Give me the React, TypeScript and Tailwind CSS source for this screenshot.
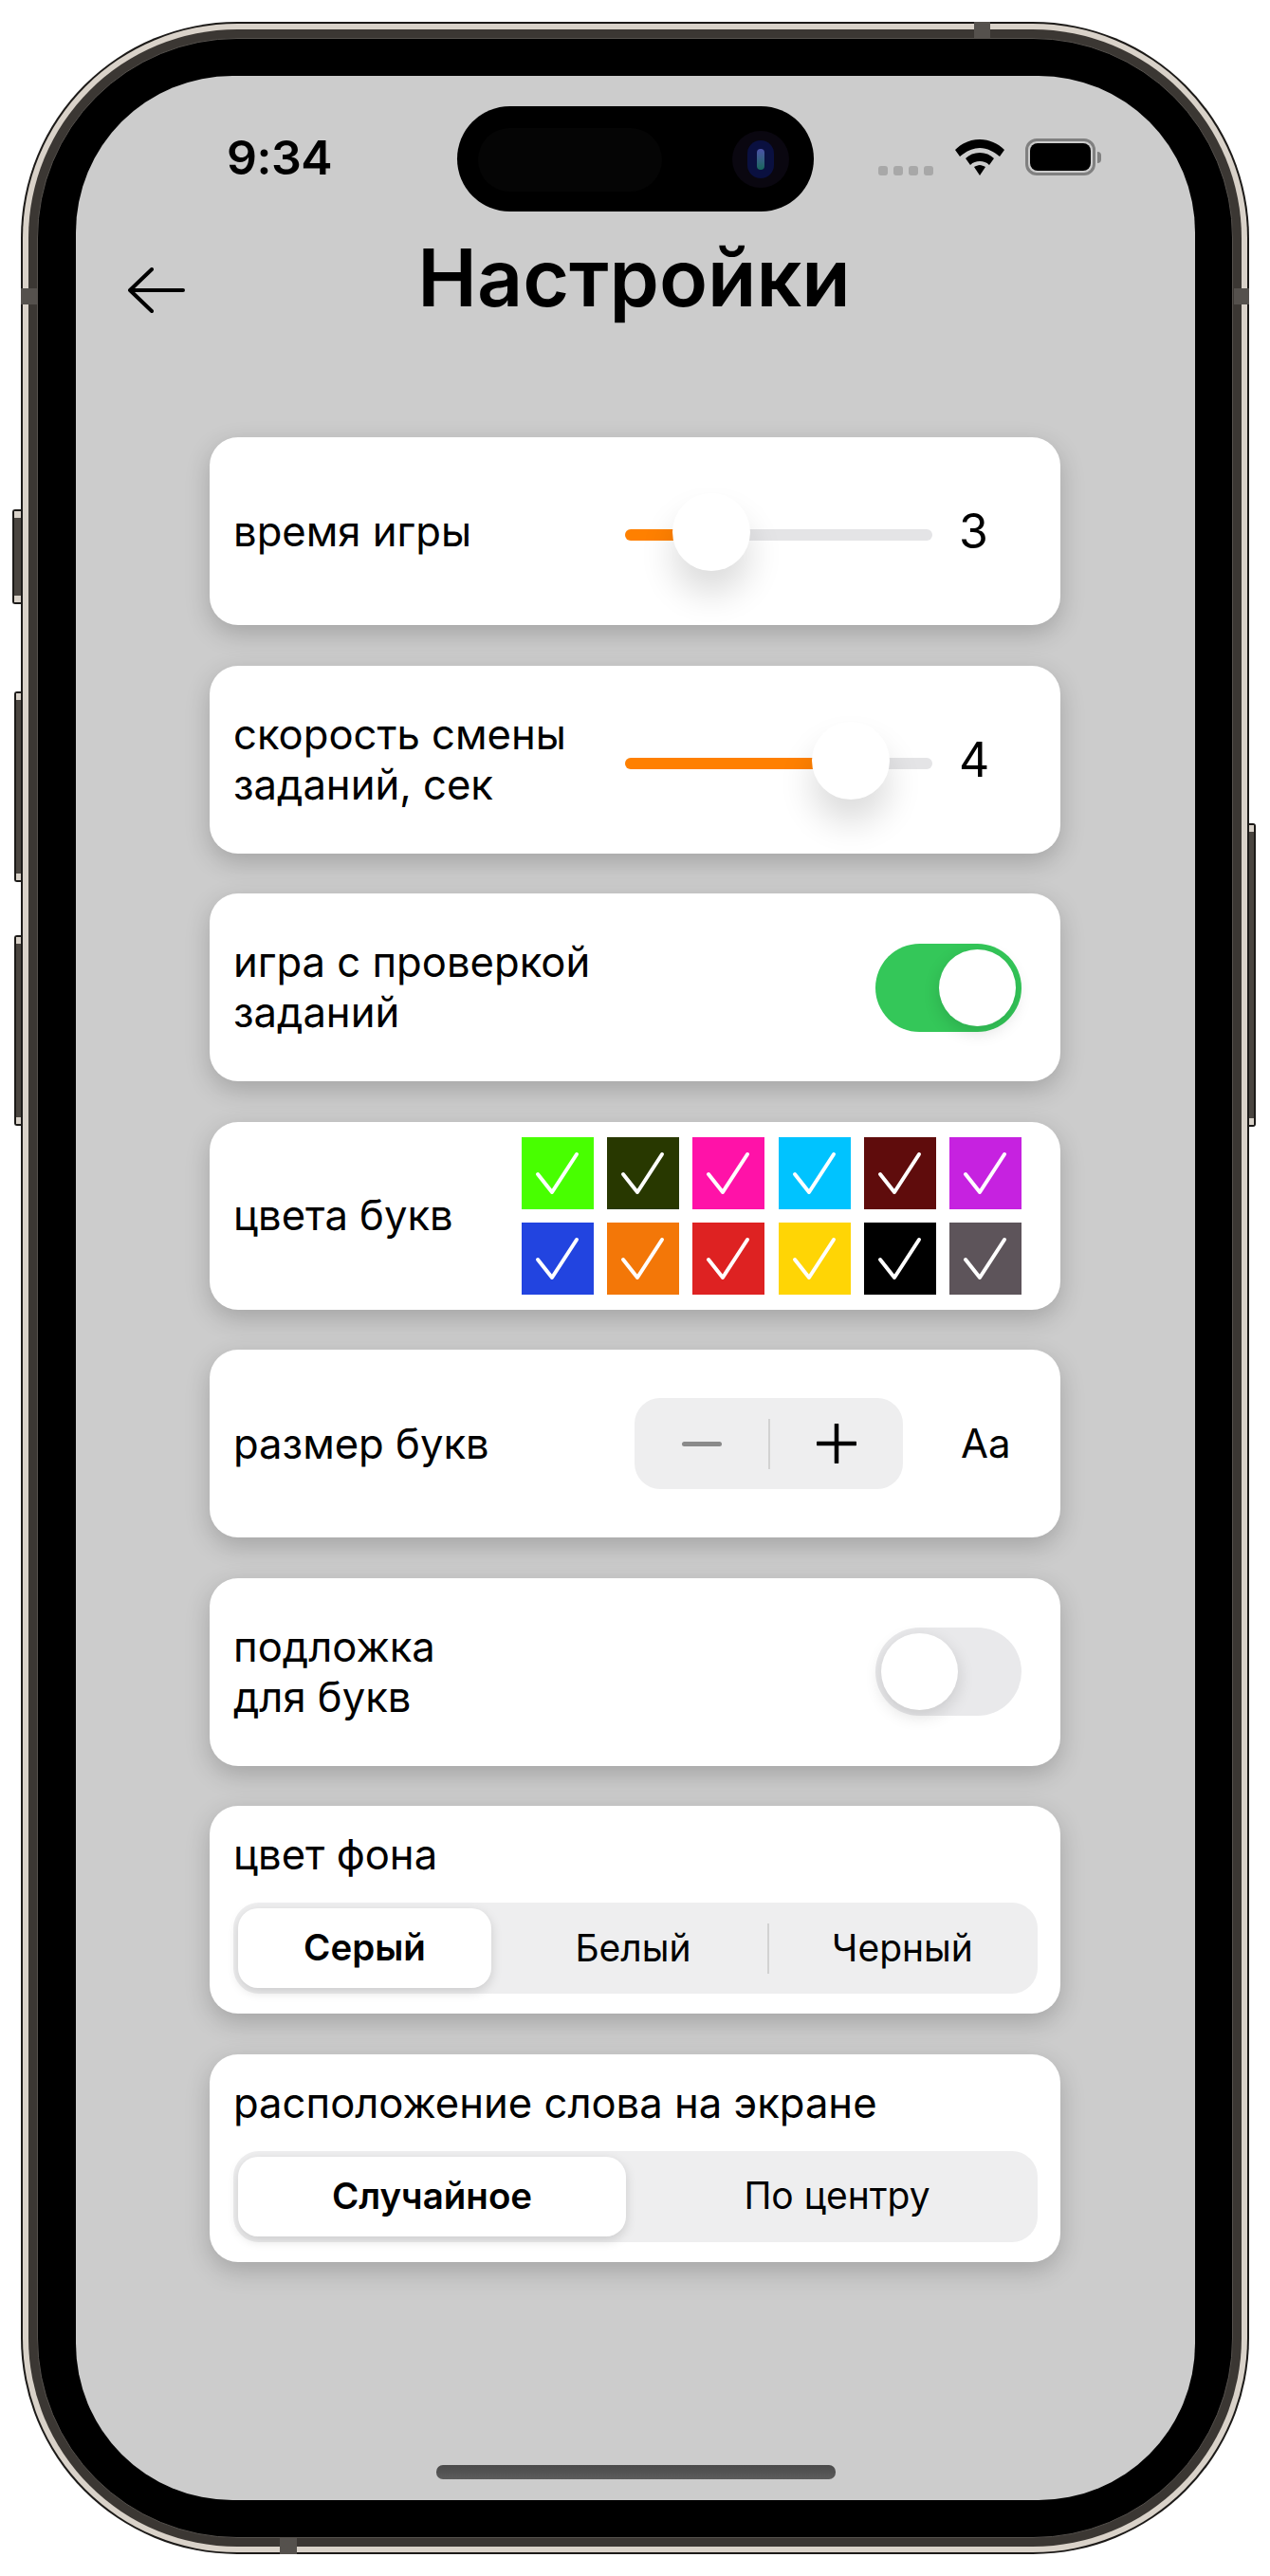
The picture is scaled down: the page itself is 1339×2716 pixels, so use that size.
const swatches = ['#48ff00', '#283800', '#ff12a8', '#00c3ff', '#5f0c0c', '#c622e0', '#2244e0', '#f37708', '#de2222', '#ffd505', '#000000', '#5d545a'];

function Check() {
  return (
    <svg viewBox="0 0 76 76" className="w-[76px] h-[76px]" fill="none">
      <path d="M17 39 L32 58 L58 18" stroke="#fff" strokeWidth="4" strokeLinecap="round" strokeLinejoin="round" />
    </svg>
  );
}

function Slider({ fill, value }: { fill: number; value: string }) {
  return (
    <div className="flex items-center w-[435px]">
      <div className="relative w-[324px] h-[12px] mt-[8px] rounded-full bg-[#e4e4e6]">
        <div className="h-full rounded-full bg-[#ff8000]" style={{ width: fill + 12 }} />
        <div
          className="absolute top-[-38px] w-[82px] h-[82px] rounded-full bg-white shadow-[0_24px_36px_rgba(0,0,0,0.14)]"
          style={{ left: fill }}
        />
      </div>
      <span className="ml-[28px] text-[50px] leading-none">{value}</span>
    </div>
  );
}

function Toggle({ on }: { on: boolean }) {
  return (
    <div className={`flex w-[154px] h-[93px] p-[6px] rounded-full ${on ? 'bg-[#34c759] justify-end' : 'bg-[#e9e9eb] justify-start'}`}>
      <div className="w-[81px] h-[81px] rounded-full bg-white shadow-[0_6px_18px_rgba(0,0,0,0.14)]" />
    </div>
  );
}

function Card({ children, className = '' }: { children: React.ReactNode; className?: string }) {
  return (
    <div className={`w-[897px] rounded-[30px] bg-white shadow-[0_9px_27px_rgba(0,0,0,0.2)] pl-[25px] pr-[24px] ${className}`}>
      {children}
    </div>
  );
}

function Label({ children }: { children: React.ReactNode }) {
  return <div className="text-[43.6px] leading-[53px] text-black">{children}</div>;
}

function SideButton({ className }: { className: string }) {
  return (
    <div className={`absolute flex flex-col justify-between bg-[#4a4540] border-2 border-[#1c1a18] ${className}`}>
      <div className="h-[7px] bg-[#d9d2c9]" />
      <div className="h-[7px] bg-[#d9d2c9]" />
    </div>
  );
}

export default function App() {
  return (
    <div className="relative w-[1339px] h-[2716px] bg-white pl-[22px] pt-[23px] font-['Inter',sans-serif]">
      <SideButton className="left-[13px] top-[537px] w-[10px] h-[100px] rounded-l-[3px] border-r-0" />
      <SideButton className="left-[15px] top-[729px] w-[8px] h-[201px] rounded-l-[3px] border-r-0" />
      <SideButton className="left-[15px] top-[986px] w-[8px] h-[201px] rounded-l-[3px] border-r-0" />
      <SideButton className="left-[1316px] top-[868px] w-[8px] h-[320px] rounded-r-[3px] border-l-0" />

      <div className="relative w-[1295px] h-[2670px] rounded-[228px] bg-[#1c1a18] p-[2px]">
        <div className="rounded-[226px] bg-[#d9d2c9] p-[6px]">
          <div className="rounded-[220px] bg-[#3b3733] p-[9px]">
            <div className="rounded-[211px] bg-black border border-[#55514d] pl-[40px] pr-[39px] py-[39px]">
              <div className="relative flex flex-col w-[1180px] h-[2556px] rounded-[165px] bg-[#cccccc] overflow-hidden">
                {/* dynamic island */}
                <div className="absolute left-[402px] top-[32px] w-[376px] h-[111px] rounded-full bg-black">
                  <div className="absolute left-[22px] top-[23px] w-[194px] h-[67px] rounded-full bg-[#050505]" />
                  <div className="absolute left-[290px] top-[26px] w-[60px] h-[60px] rounded-full bg-[#0a0710] flex items-center justify-center">
                    <div className="w-[28px] h-[40px] rounded-full bg-[#0a1040] flex items-center justify-center">
                      <div className="w-[8px] h-[22px] rounded-full bg-gradient-to-b from-[#4a50a8] to-[#15665a]" />
                    </div>
                  </div>
                </div>

                {/* status bar */}
                <div className="flex items-center h-[39px] mt-[66px] pl-[159px]">
                  <span className="text-[50px] leading-none font-semibold tracking-[-0.5px] text-black">9:34</span>
                  <div className="flex items-end gap-[6px] ml-[576px] h-[38px]">
                    {[0, 1, 2, 3].map((i) => (
                      <div key={i} className="w-[10px] h-[10px] rounded-[3px] bg-[#a8a8a8]" />
                    ))}
                  </div>
                  <svg viewBox="0 0 52 38" className="ml-[23px] w-[52px] h-[38px]">
                    <path d="M26 0C16 0 7 4 0 11l5 7c6-5 13-9 21-9s15 4 21 9l5-7C45 4 36 0 26 0Z" />
                    <path d="M26 14c-6 0-11 2-15 6l5 7c3-3 6-4 10-4s7 1 10 4l5-7c-4-4-9-6-15-6Z" />
                    <path d="M26 27c-2 0-4 1-6 2l6 9 6-9c-2-1-4-2-6-2Z" />
                  </svg>
                  <div className="ml-[22px] flex items-center">
                    <div className="w-[74px] h-[39px] rounded-[12px] border-[3px] border-[#808080] p-[2px]">
                      <div className="w-full h-full rounded-[8px] bg-black" />
                    </div>
                    <div className="ml-[2px] w-[4px] h-[12px] rounded-r-full bg-[#808080]" />
                  </div>
                </div>

                {/* header */}
                <div className="flex items-center h-[100px] mt-[58px]">
                  <svg viewBox="0 0 60 48" className="self-start mt-[39px] ml-[55px] w-[60px] h-[48px] shrink-0" fill="none">
                    <path d="M58 24H2M25 2 2 24l0 0L25 46" stroke="#000" strokeWidth="4" strokeLinecap="round" strokeLinejoin="round" />
                  </svg>
                  <h1 className="flex-1 mr-[118px] text-center text-[84px] leading-none font-semibold text-black">Настройки</h1>
                </div>

                {/* cards */}
                <div className="flex flex-col gap-[42.5px] pl-[141px] mt-[118px]">
                  <Card className="flex items-center justify-between h-[198px]">
                    <Label>время игры</Label>
                    <Slider fill={50} value="3" />
                  </Card>
                  <Card className="flex items-center justify-between h-[198px]">
                    <Label>скорость смены<br />заданий, сек</Label>
                    <Slider fill={197} value="4" />
                  </Card>
                  <Card className="flex items-center justify-between h-[198px]">
                    <Label>игра с проверкой<br />заданий</Label>
                    <div className="mr-[17px]"><Toggle on /></div>
                  </Card>
                  <Card className="flex items-center justify-between h-[198px]">
                    <Label>цвета букв</Label>
                    <div className="grid grid-cols-6 gap-x-[14.2px] gap-y-[14px] mr-[17px]">
                      {swatches.map((c) => (
                        <div key={c} className="w-[76px] h-[76px]" style={{ background: c }}>
                          <Check />
                        </div>
                      ))}
                    </div>
                  </Card>
                  <Card className="flex items-center justify-between h-[198px]">
                    <Label>размер букв</Label>
                    <div className="flex items-center">
                      <div className="flex items-center w-[283px] h-[96px] rounded-[27px] bg-[#eeeeef]">
                        <div className="flex justify-center w-[141px]">
                          <div className="w-[42px] h-[5px] rounded-full bg-[#8a8a8a]" />
                        </div>
                        <div className="w-[2px] h-[53px] bg-[#d2d2d2]" />
                        <div className="flex justify-center flex-1">
                          <svg viewBox="0 0 42 42" className="w-[42px] h-[42px]">
                            <path d="M21 1v40M1 21h40" stroke="#000" strokeWidth="4.5" strokeLinecap="round" />
                          </svg>
                        </div>
                      </div>
                      <span className="w-[53px] ml-[61px] mr-[28px] text-[42px] leading-none text-black whitespace-nowrap">Aa</span>
                    </div>
                  </Card>
                  <Card className="flex items-center justify-between h-[198px]">
                    <Label>подложка<br />для букв</Label>
                    <div className="mr-[17px]"><Toggle on={false} /></div>
                  </Card>
                  <Card className="h-[219px] pt-[25px]">
                    <Label>цвет фона</Label>
                    <div className="flex items-center h-[96px] mt-[24px] rounded-[27px] bg-[#eeeeef] px-[5px] text-[39px] text-black">
                      <div className="flex items-center justify-center w-[267px] h-[84px] rounded-[21px] bg-white shadow-[0_4px_12px_rgba(0,0,0,0.15)] font-semibold text-[38.5px]">Серый</div>
                      <div className="flex items-center justify-center w-[291px] pl-[8px]">Белый</div>
                      <div className="w-[2px] h-[53px] bg-[#d2d2d2]" />
                      <div className="flex items-center justify-center flex-1 pl-[3px]">Черный</div>
                    </div>
                  </Card>
                  <Card className="h-[219px] pt-[25px]">
                    <Label>расположение слова на экране</Label>
                    <div className="flex items-center h-[96px] mt-[24px] rounded-[27px] bg-[#eeeeef] px-[5px] text-[39px] text-black">
                      <div className="flex items-center justify-center w-[409px] h-[84px] rounded-[21px] bg-white shadow-[0_4px_12px_rgba(0,0,0,0.15)] font-semibold text-[38.5px]">Случайное</div>
                      <div className="flex items-center justify-center flex-1 pl-[16px]">По центру</div>
                    </div>
                  </Card>
                </div>

                {/* home indicator */}
                <div className="mt-auto mb-[22px] mx-auto w-[421px] h-[15px] rounded-[7px] bg-gradient-to-b from-[#4a4a4a] to-[#5c5c5c]" />
              </div>
            </div>
          </div>
        </div>

        {/* antenna bands */}
        <div className="absolute left-[1005px] top-0 w-[17px] h-[17px] bg-[#55514d]" />
        <div className="absolute left-0 top-[281px] w-[18px] h-[17px] bg-[#55514d]" />
        <div className="absolute right-0 top-[281px] w-[16px] h-[17px] bg-[#55514d]" />
        <div className="absolute left-[273px] bottom-0 w-[18px] h-[17px] bg-[#55514d]" />
      </div>
    </div>
  );
}
